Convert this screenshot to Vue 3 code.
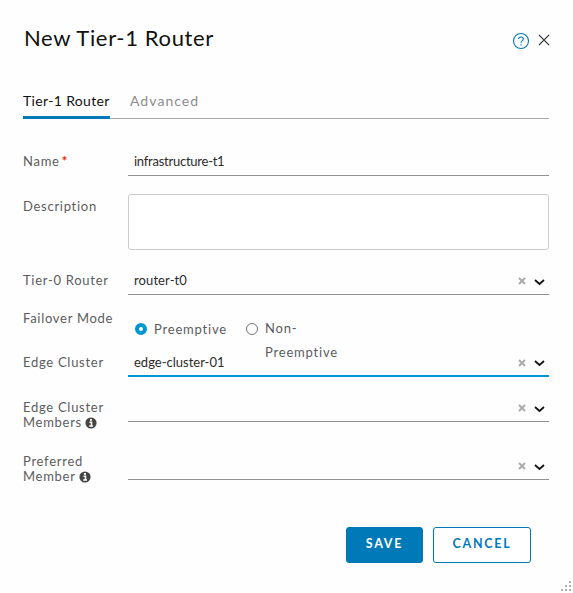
<script setup>
import { ref } from 'vue'

const tab = ref('router')
const mode = ref('preemptive')
const name = ref('infrastructure-t1')
const description = ref('')
const lower = ref([
  { label: ['Edge Cluster'], value: 'edge-cluster-01', kind: 'edge', focused: true },
  { label: ['Edge Cluster', 'Members'], value: '', kind: 'members', info: true },
  { label: ['Preferred', 'Member'], value: '', kind: 'preferred', info: true }
])
const tier0 = ref('router-t0')
</script>

<template>
  <form class="dialog" @submit.prevent>
    <header class="header">
      <h1 class="title">New Tier-1 Router</h1>
      <div class="actions">
        <svg class="help" viewBox="0 0 18 18">
          <circle cx="9" cy="9" r="7.5" />
          <path d="M6.6 7.1C6.6 5.7 7.6 5 9 5s2.4.8 2.4 2.1C11.4 8.7 9 8.7 9 10.7M9 12.2v1.2" />
        </svg>
        <svg class="close" viewBox="0 0 12 12"><path d="M1 1l10 10M11 1L1 11" /></svg>
      </div>
    </header>

    <nav class="tabs">
      <span class="tab" :class="{ active: tab === 'router' }" @click="tab = 'router'">Tier-1 Router</span>
      <span class="tab" :class="{ active: tab === 'advanced' }" @click="tab = 'advanced'">Advanced</span>
    </nav>

    <div class="row name">
      <label class="label">Name<span class="star">*</span></label>
      <div class="field"><input v-model="name" class="input" type="text" /></div>
    </div>

    <div class="row description">
      <label class="label">Description</label>
      <textarea v-model="description" class="area"></textarea>
    </div>

    <div class="row tier">
      <label class="label">Tier-0 Router</label>
      <div class="field">
        <span class="value">{{ tier0 }}</span>
        <svg class="clear" viewBox="0 0 8 8"><path d="M1 1l6 6M7 1L1 7" /></svg>
        <svg class="chevron" viewBox="0 0 11 7"><path d="M1 1l4.500 4L10 1" /></svg>
      </div>
    </div>

    <div class="row failover">
      <label class="label">Failover Mode</label>
      <div class="radios">
        <span class="radio" :class="{ on: mode === 'preemptive' }" @click="mode = 'preemptive'"></span>
        <span class="option first">Preemptive</span>
        <span class="radio" :class="{ on: mode === 'non' }" @click="mode = 'non'"></span>
        <span class="option second">Non-<br />Preemptive</span>
      </div>
    </div>

    <div v-for="row in lower" :key="row.kind" class="row" :class="row.kind">
      <label class="label">
        <span v-for="(line, i) in row.label" :key="line" class="line">{{ line }}<svg
          v-if="row.info && i === 1" class="info" viewBox="0 0 12 12"><circle cx="6" cy="6" r="5.6" /><path d="M4.500 5.200h2v3.800M4.200 9h3.800" /><rect x="5" y="2" width="2" height="1.800" /></svg></span>
      </label>
      <div class="field" :class="{ focused: row.focused }">
        <span class="value">{{ row.value }}</span>
        <svg class="clear" viewBox="0 0 8 8"><path d="M1 1l6 6M7 1L1 7" /></svg>
        <svg class="chevron" viewBox="0 0 11 7"><path d="M1 1l4.500 4L10 1" /></svg>
      </div>
    </div>

    <footer class="footer">
      <button class="button save">SAVE</button>
      <button class="button cancel">CANCEL</button>
    </footer>

    <svg class="grip" viewBox="0 0 12 11">
      <path d="M8 0h2v2H8zM4 4h2v2H4zM8 4h2v2H8zM0 8h2v2H0zM4 8h2v2H4zM8 8h2v2H8z" />
    </svg>
  </form>
</template>

<style>
body {
  background: #fefefe;
  overflow: hidden;
}
</style>

<style scoped>
* {
  box-sizing: border-box;
}
.dialog {
  position: relative;
  width: 573px;
  height: 593px;
  padding: 25px 24px 0 23px;
  background: #fefefe;
  font-family: Lato, "Liberation Sans", sans-serif;
  font-size: 13px;
  line-height: 15px;
  color: #5c5c5c;
}
.header {
  display: flex;
  justify-content: space-between;
  height: 62px;
}
.title {
  margin: 0 0 0 1px;
  font-size: 22px;
  font-weight: 400;
  line-height: 26px;
  letter-spacing: 0.65px;
  color: #111;
}
.actions {
  display: flex;
  gap: 8px;
  padding-top: 7px;
}
.help {
  width: 18px;
  height: 18px;
  fill: none;
  stroke: #0079b8;
  stroke-width: 1.1;
}
.close {
  width: 12px;
  height: 12px;
  margin: 2px -1px 0 0;
  fill: none;
  stroke: #454545;
  stroke-width: 1.2;
}
.tabs {
  display: flex;
  gap: 20px;
  height: 32px;
  box-shadow: inset 0 -1px #a6a6a6;
}
.tab {
  padding-top: 6px;
  font-size: 14px;
  line-height: 16px;
  letter-spacing: 0.9px;
  color: #8c8c8c;
}
.tab + .tab {
  letter-spacing: 1.050px;
}
.tab.active {
  width: 87px;
  border-bottom: 3px solid #0079b8;
  letter-spacing: 0.35px;
  color: #111;
  white-space: nowrap;
}
.row {
  display: grid;
  grid-template-columns: 105px 421px;
  align-items: start;
}
.label {
  padding-top: 8px;
  letter-spacing: 0.72px;
  white-space: nowrap;
}
.line {
  display: block;
}
.star {
  margin-left: 2px;
  color: #e62700;
  font-weight: 700;
}
.field {
  display: flex;
  align-items: center;
  height: 30px;
  padding: 0 4px 0 6px;
  border-bottom: 1px solid #919191;
}
.field.focused {
  border-bottom: 2px solid #0095d3;
}
.input,
.value {
  flex: 1;
  min-width: 0;
  padding: 2px 0 0;
  border: 0;
  outline: 0;
  background: none;
  font: inherit;
  letter-spacing: 0.1px;
  color: #2b2b2b;
}
.input {
  letter-spacing: -0.25px;
}
.focused .value {
  padding-top: 3px;
  letter-spacing: 0;
}
.clear {
  width: 8px;
  height: 8px;
  margin: 3px 8px 0 0;
  fill: none;
  stroke: #aaa;
  stroke-width: 2;
}
.focused .clear {
  margin-top: 4px;
}
.chevron {
  width: 11px;
  height: 7px;
  margin-top: 5px;
  fill: none;
  stroke: #111;
  stroke-width: 1.7;
}
.name {
  margin-top: 27px;
}
.description {
  margin-top: 18px;
}
.description .label {
  padding-top: 5px;
}
.area {
  width: 421px;
  height: 56px;
  border: 1px solid #ccc;
  border-radius: 3px;
  outline: 0;
  resize: none;
  background: #fff;
}
.tier {
  margin-top: 15px;
}
.failover {
  height: 52px;
}
.failover .label {
  padding-top: 16px;
}
.radios {
  display: flex;
  padding: 22px 0 0 7px;
}
.radio {
  width: 12px;
  height: 12px;
  margin-top: 6px;
  border: 1px solid #737373;
  border-radius: 50%;
  background: #fff;
}
.radio.on {
  border: 4px solid #0095d3;
}
.option {
  line-height: 24px;
  letter-spacing: 0.8px;
}
.first {
  width: 99px;
  padding-left: 7px;
}
.second {
  margin-top: -1px;
  padding-left: 7px;
}
.members {
  margin-top: 15px;
}
.preferred {
  margin-top: 20px;
}
.preferred .label {
  padding-top: 4px;
}
.info {
  width: 12px;
  height: 12px;
  margin-left: 3px;
  vertical-align: -2px;
  fill: #454545;
}
.info path {
  fill: none;
  stroke: #fff;
  stroke-width: 1.5;
}
.info rect {
  fill: #fff;
}
.footer {
  display: flex;
  justify-content: flex-end;
  gap: 10px;
  margin-top: 43px;
  padding-right: 18px;
}
.button {
  height: 36px;
  padding: 0 0 2px;
  border: 1px solid #0079b8;
  border-radius: 3px;
  font: 700 12.500px/14px Lato, "Liberation Sans", sans-serif;
  letter-spacing: 1.750px;
}
.save {
  width: 77px;
  background: #0079b8;
  color: #fff;
}
.cancel {
  width: 98px;
  background: #fff;
  color: #0079b8;
}
.grip {
  position: absolute;
  right: 0;
  bottom: 1px;
  width: 12px;
  height: 11px;
  fill: #b0b0b0;
}
</style>
